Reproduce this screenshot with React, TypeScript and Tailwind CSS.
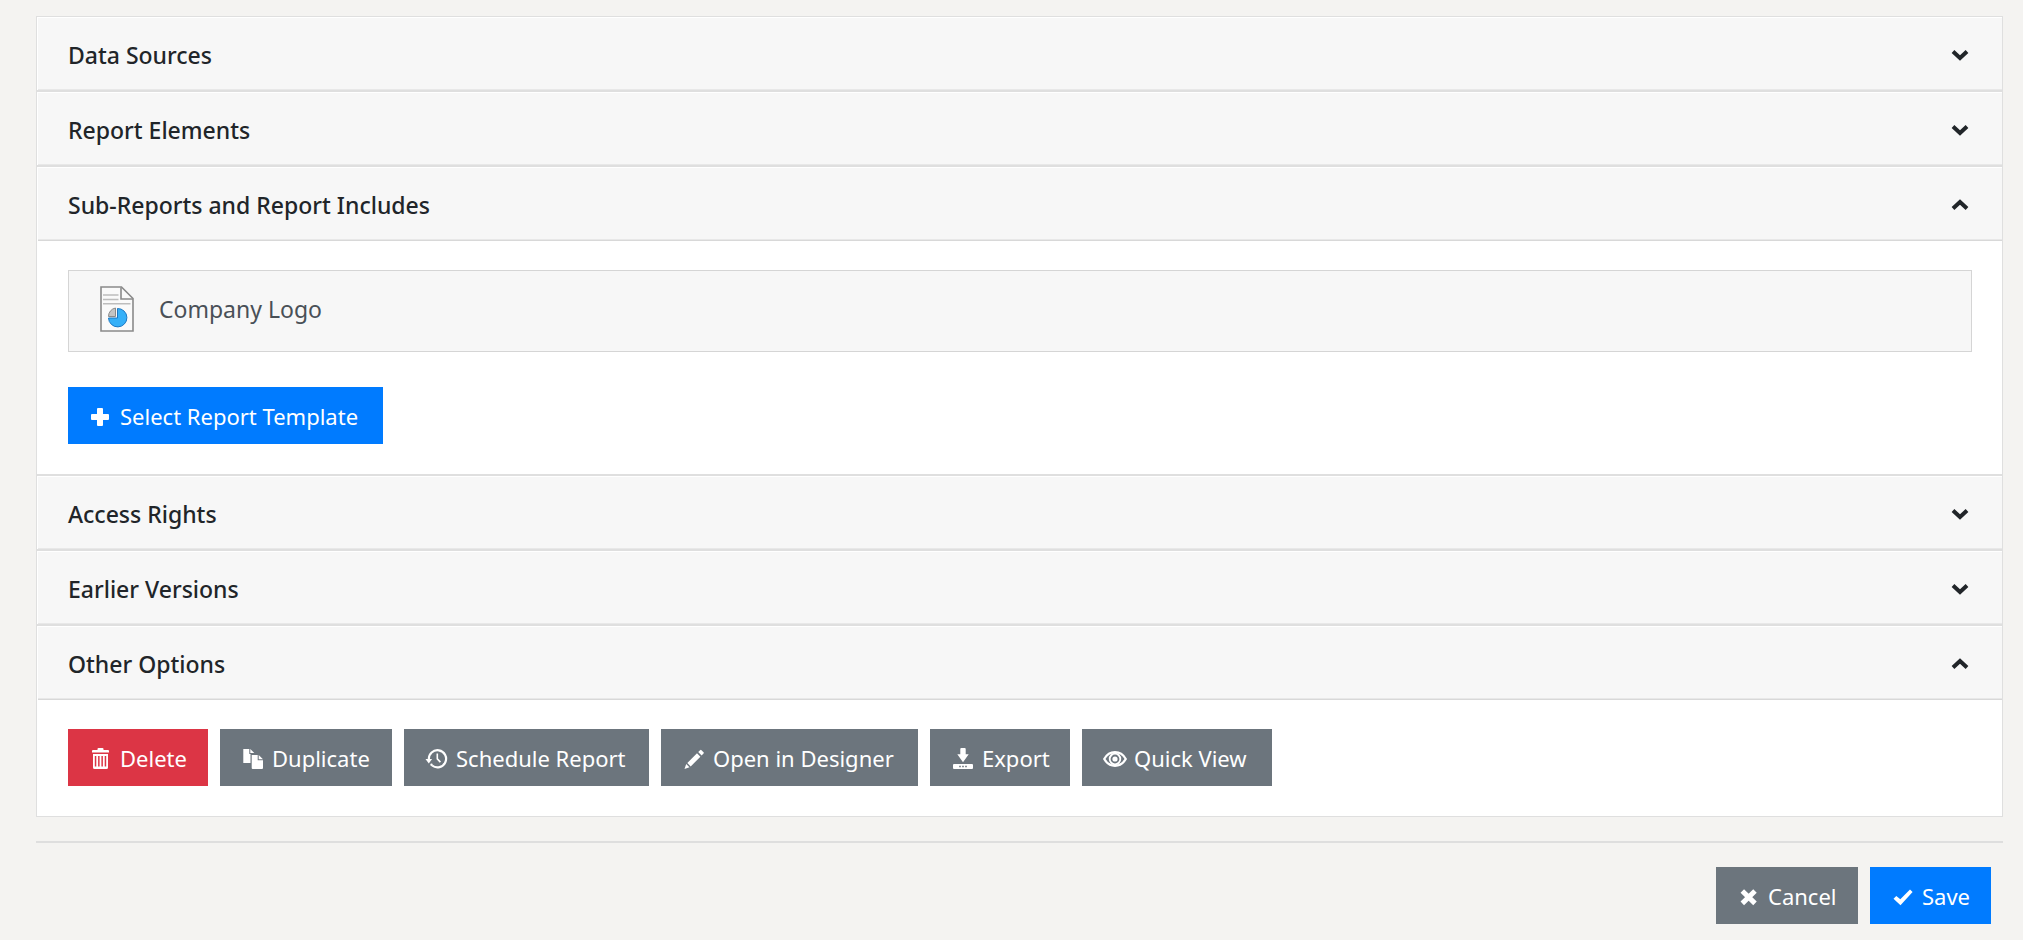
import React, { useState } from 'react';
import clsx from 'clsx';

type IconProps = { children: React.ReactNode };

function Icon({ children }: IconProps) {
  return (
    <svg viewBox="0 0 24 24" className="w-6 h-6 shrink-0" fill="currentColor" aria-hidden="true">
      {children}
    </svg>
  );
}

const PlusIcon = () => (
  <Icon>
    <path d="M9 4h4a1 1 0 0 1 1 1v5h5a1 1 0 0 1 1 1v4a1 1 0 0 1-1 1h-5v5a1 1 0 0 1-1 1H9a1 1 0 0 1-1-1v-5H3a1 1 0 0 1-1-1v-4a1 1 0 0 1 1-1h5V5a1 1 0 0 1 1-1z" />
  </Icon>
);

const TrashIcon = () => (
  <Icon>
    <path d="M8.500 4V3a1 1 0 0 1 1-1h4a1 1 0 0 1 1 1v1H19a1 1 0 0 1 1 1v1.500H3V5a1 1 0 0 1 1-1z" />
    <path
      fillRule="evenodd"
      d="M4 8h15v13.500a1.500 1.500 0 0 1-1.500 1.500h-12A1.500 1.500 0 0 1 4 21.500zM5.800 10v10.500h1.500V10zM9.100 10v10.500h1.500V10zM12.400 10v10.500h1.500V10zM15.700 10v10.500h1.500V10z"
    />
  </Icon>
);

const CopyIcon = () => (
  <Icon>
    <path d="M2.300 3h6v5h1.200v9H2.300zM9.300 3l4 4h-4z" />
    <path d="M10.700 9h6v5.200H22V22a1 1 0 0 1-1 1h-9.300a1 1 0 0 1-1-1zM17.700 9l4.300 4.200h-4.300z" />
  </Icon>
);

const HistoryIcon = () => (
  <Icon>
    <path
      d="M3.900 13.500a8.600 8.600 0 1 1 3.200 6"
      fill="none"
      stroke="currentColor"
      strokeWidth="2.200"
    />
    <path d="M.5 13h6.600L3.800 17.500z" />
    <path d="M11.500 7.500h1.600v5l2.900 3-1.200 1.200-3.300-3.400z" />
    <circle cx="6.500" cy="18.800" r="1.200" />
  </Icon>
);

const PencilIcon = () => (
  <Icon>
    <path d="M2.500 23l1.700-5 3.300 3.300zM5.300 17L15 7.300l3.400 3.400-9.700 9.700zM16.200 6.100l1.900-1.900a1 1 0 0 1 1.400 0l2 2a1 1 0 0 1 0 1.400l-1.900 1.900z" />
  </Icon>
);

const ExportIcon = () => (
  <Icon>
    <path d="M9.300 3a1 1 0 0 1 1-1h3.400a1 1 0 0 1 1 1v5.300h3L12 16.300l-5.700-8h3z" />
    <path
      fillRule="evenodd"
      d="M3 18h18a1 1 0 0 1 1 1v3a1 1 0 0 1-1 1H3a1 1 0 0 1-1-1v-3a1 1 0 0 1 1-1zM8.200 19.700v1.600h1.600v-1.600zM11.200 19.700v1.600h1.600v-1.600zM14.200 19.700v1.600h1.600v-1.600z"
    />
  </Icon>
);

const EyeIcon = () => (
  <Icon>
    <path
      d="M1.200 13C3.500 9 7.500 6.200 12 6.200S20.500 9 22.800 13C20.500 17 16.500 19.800 12 19.800S3.500 17 1.200 13z"
      fill="none"
      stroke="currentColor"
      strokeWidth="2.200"
    />
    <circle cx="12" cy="13" r="5.300" fill="none" stroke="currentColor" strokeWidth="1.800" />
    <circle cx="12" cy="13" r="2.600" />
  </Icon>
);

const CloseIcon = () => (
  <Icon>
    <path d="M5.300 7l12.700 12.400M18 7L5.300 19.400" stroke="currentColor" strokeWidth="5" />
  </Icon>
);

const CheckIcon = () => (
  <Icon>
    <path d="M2.500 14.800l2.800-2.900 4 3.400 9.700-9.800 2.600 2.500L9.500 21.300z" />
  </Icon>
);

function ReportFileIcon() {
  return (
    <svg viewBox="0 0 34 46" className="w-[34px] h-[46px] shrink-0" fill="none" aria-hidden="true">
      <path d="M1 1h20.500L33 12.500V45H1z" fill="#fafafa" stroke="#8a8a8a" strokeWidth="1.600" />
      <path d="M21 1.500v11.500h12" stroke="#8a8a8a" strokeWidth="1.600" />
      <path d="M3 9h15.500M3 13.500h15.500M3 17.700h27.500" stroke="#bdbdbd" strokeWidth="1.500" />
      <path d="M17.500 22.500v9.500H8.500a9.200 9.200 0 1 0 9-9.500z" fill="#35b0f8" stroke="#1b78c4" strokeWidth="1" />
      <path d="M15.500 30.500V22a8.500 8.500 0 0 0-7 8.500z" fill="#c4c4c4" stroke="#8a8a8a" strokeWidth="1" />
    </svg>
  );
}

function Chevron({ open }: { open: boolean }) {
  return (
    <svg viewBox="0 0 18 12" className="w-[18px] h-3 shrink-0" fill="none" stroke="currentColor" strokeWidth="4" aria-hidden="true">
      {open ? <path d="M2 9.500l7-6.500 7 6.500" /> : <path d="M2 2.500L9 9l7-6.500" />}
    </svg>
  );
}

interface ActionButtonProps {
  icon: React.ReactNode;
  label: string;
  tone?: 'primary' | 'secondary' | 'danger';
  className?: string;
}

function ActionButton({ icon, label, tone = 'secondary', className }: ActionButtonProps) {
  return (
    <button
      type="button"
      className={clsx(
        'inline-flex items-center gap-[7px] h-[57px] pl-[21px] pr-4 text-white whitespace-nowrap cursor-pointer',
        tone === 'primary' && 'bg-[#007bff] hover:bg-[#0069d9]',
        tone === 'secondary' && 'bg-[#6c757d] hover:bg-[#5a6268]',
        tone === 'danger' && 'bg-[#dc3545] hover:bg-[#c82333]',
        className
      )}
    >
      {icon}
      <span>{label}</span>
    </button>
  );
}

interface SectionProps {
  title: string;
  defaultOpen?: boolean;
  last?: boolean;
  children?: React.ReactNode;
}

function Section({ title, defaultOpen = false, last = false, children }: SectionProps) {
  const [open, setOpen] = useState(defaultOpen);

  return (
    <section className={clsx(!last && 'border-b-2 border-[#dfdfdf]')}>
      <h2 className="border-t border-l border-white">
        <button
          type="button"
          aria-expanded={open}
          onClick={() => setOpen(!open)}
          className="w-full h-[72px] pt-0.5 pl-[30px] pr-[33px] flex items-center justify-between bg-[#f7f7f7] border-b border-[#e8e8e8] text-[23px] font-medium text-[#212529] text-left cursor-pointer"
        >
          <span>{title}</span>
          <Chevron open={open} />
        </button>
      </h2>
      {open && <div className="ml-px border-t border-[#d8d8d8] px-[30px] pt-[29px] pb-[30px]">{children}</div>}
    </section>
  );
}

export default function App() {
  return (
    <main className="min-h-screen bg-[#f4f3f1] pt-4 pl-9 pr-5 pb-4 font-['Noto_Sans','Open_Sans',sans-serif] text-[22px] leading-9">
      <div className="bg-white border border-[#dfdfdf]">
        <Section title="Data Sources" />
        <Section title="Report Elements" />
        <Section title="Sub-Reports and Report Includes" defaultOpen>
          <div className="h-[82px] pl-[31px] pb-1 flex items-center gap-[25px] bg-[#f7f7f7] border border-[#d5d5d5] text-[23px] text-[#495057]">
            <ReportFileIcon />
            <span>Company Logo</span>
          </div>
          <div className="mt-[35px] flex">
            <ActionButton tone="primary" icon={<PlusIcon />} label="Select Report Template" className="min-w-[315px]" />
          </div>
        </Section>
        <Section title="Access Rights" />
        <Section title="Earlier Versions" />
        <Section title="Other Options" defaultOpen last>
          <div className="flex flex-wrap gap-3">
            <ActionButton tone="danger" icon={<TrashIcon />} label="Delete" className="min-w-[140px]" />
            <ActionButton icon={<CopyIcon />} label="Duplicate" className="min-w-[172px]" />
            <ActionButton icon={<HistoryIcon />} label="Schedule Report" className="min-w-[245px]" />
            <ActionButton icon={<PencilIcon />} label="Open in Designer" className="min-w-[257px]" />
            <ActionButton icon={<ExportIcon />} label="Export" className="min-w-[140px]" />
            <ActionButton icon={<EyeIcon />} label="Quick View" className="min-w-[190px]" />
          </div>
        </Section>
      </div>
      <hr className="mt-6 border-t-2 border-[#dedede]" />
      <div className="mt-6 pr-3 flex justify-end gap-3">
        <ActionButton icon={<CloseIcon />} label="Cancel" className="min-w-[142px]" />
        <ActionButton tone="primary" icon={<CheckIcon />} label="Save" className="min-w-[121px]" />
      </div>
    </main>
  );
}
